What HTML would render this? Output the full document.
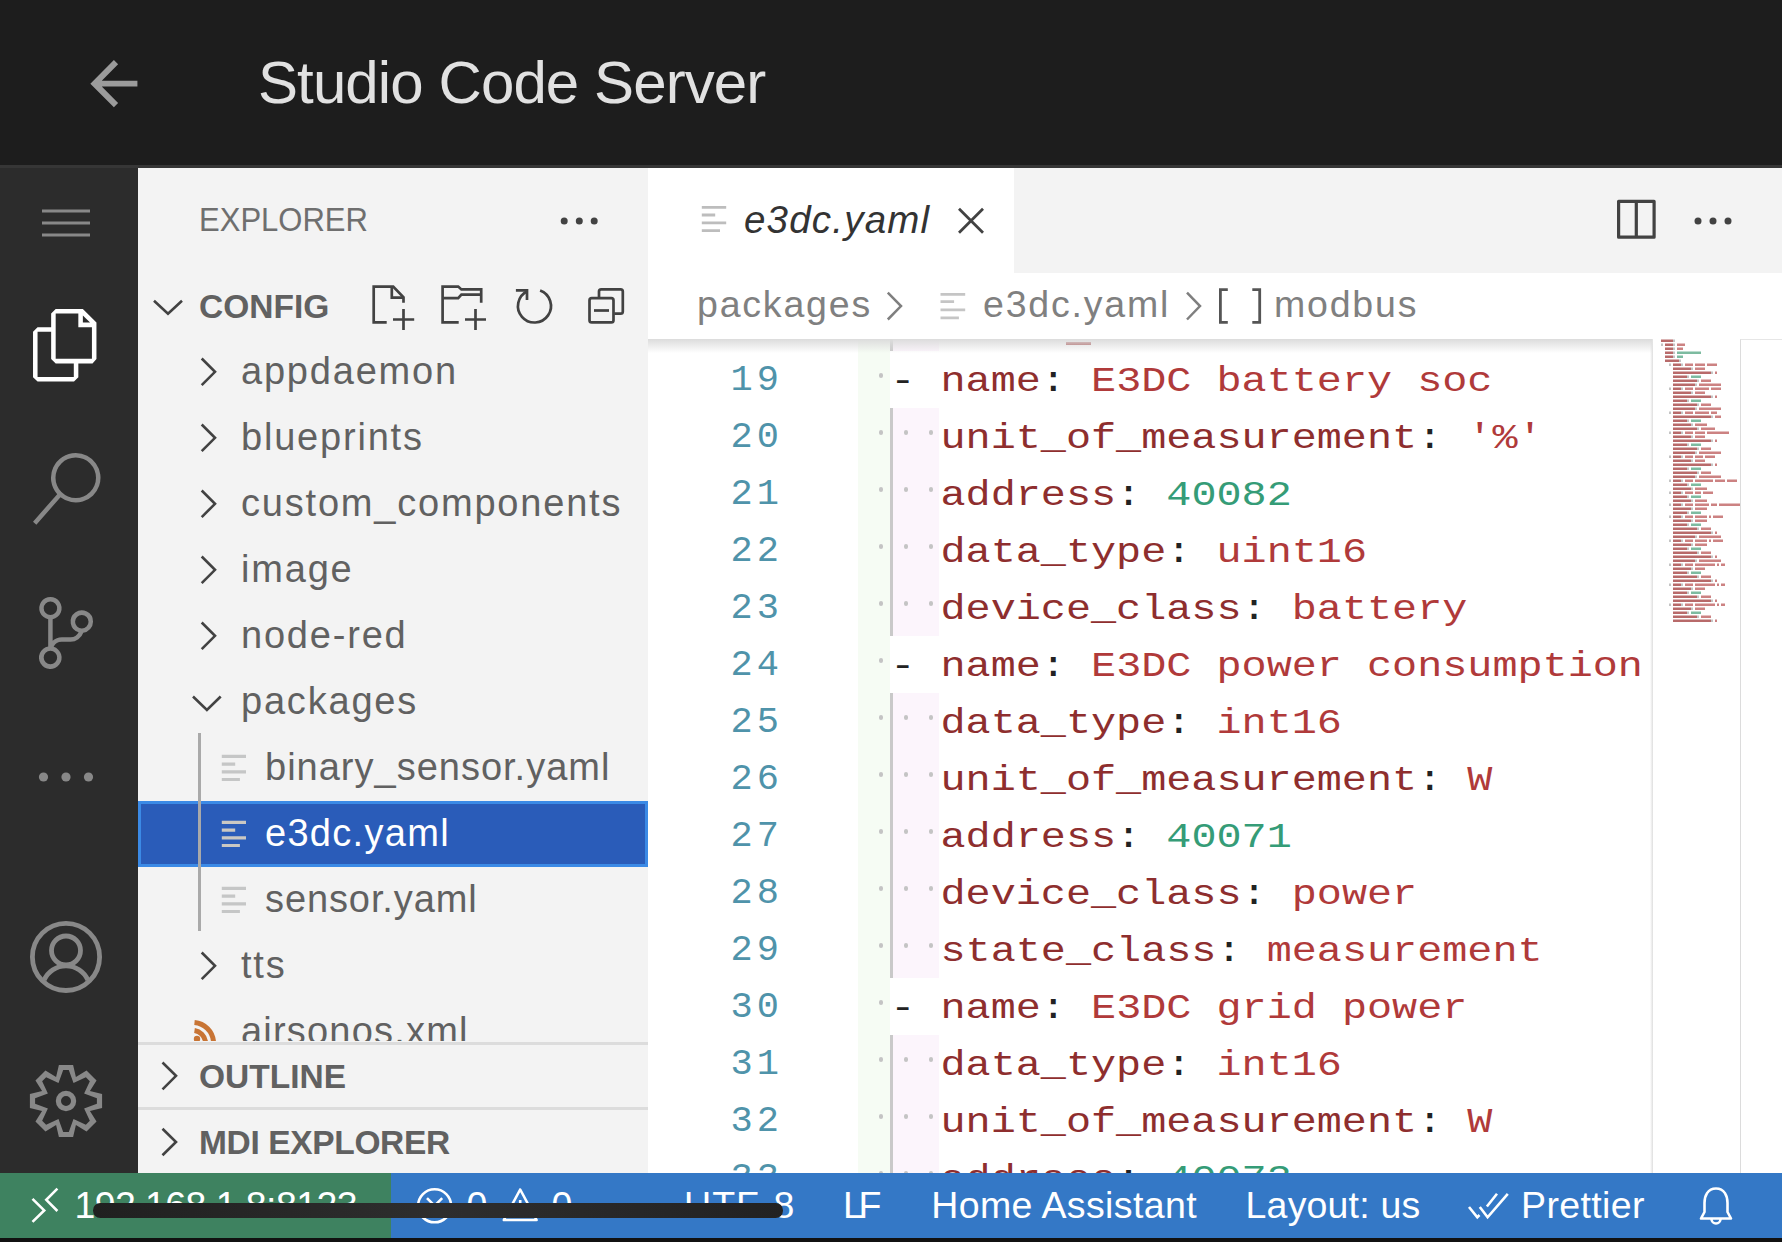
<!DOCTYPE html>
<html><head><meta charset="utf-8">
<style>
*{margin:0;padding:0;box-sizing:border-box}
html,body{width:1782px;height:1242px;overflow:hidden;background:#111}
body{position:relative;font-family:"Liberation Sans",sans-serif}
.a{position:absolute}
.t{position:absolute;white-space:pre;line-height:1}
svg{position:absolute;overflow:visible}
#title{left:0;top:0;width:1782px;height:165px;background:#1d1d1d}
#strip{left:0;top:165px;width:1782px;height:3px;background:#363636}
#act{left:0;top:168px;width:138px;height:1005px;background:#2c2c2c}
#side{left:138px;top:168px;width:510px;height:1005px;background:#f3f3f3}
#tabs{left:648px;top:168px;width:1134px;height:105px;background:#f3f3f3}
#tab{left:648px;top:168px;width:366px;height:105px;background:#fff}
#crumbs{left:648px;top:273px;width:1134px;height:66px;background:#fff}
#editor{left:648px;top:339px;width:1134px;height:834px;background:#fff;overflow:hidden}
#status{left:0;top:1173px;width:1782px;height:65px;background:#3478c6}
#remote{left:0;top:1173px;width:391px;height:65px;background:#3e8260}
.st{position:absolute;color:#fff;font-size:37.5px;line-height:1;white-space:pre}
.tree{position:absolute;font-size:38px;letter-spacing:1.8px;color:#616161;line-height:1;white-space:pre}
.code{position:absolute;font-family:"Liberation Mono",monospace;font-size:35px;letter-spacing:0;line-height:57px;white-space:pre;padding-top:3px;transform:scaleX(1.1943);transform-origin:0 0}
.dot{width:4.2px;height:4.2px;border-radius:50%;background:#c4c4c4}
.k{color:#8e2e2e}.s{color:#b03a3a}.n{color:#359c77}.p{color:#222}
.ln{position:absolute;font-family:"Liberation Mono",monospace;font-size:37px;letter-spacing:4px;padding-top:1px;color:#4f93aa;white-space:pre;line-height:57px;text-align:right;width:120px}
</style></head><body>
<div id="title" class="a"></div>
<svg style="left:77.8px;top:47.9px" width="71.3" height="71.3" viewBox="0 0 24 24"><path fill="#9b9b9b" d="M20,11V13H8L13.5,18.5L12.08,19.92L4.16,12L12.08,4.08L13.5,5.5L8,11H20Z"/></svg>
<div class="t" id="ttl" style="left:258px;top:53.4px;font-size:60px;letter-spacing:-0.9px;color:#e1e1e1">Studio Code Server</div>
<div id="strip" class="a"></div>
<div id="act" class="a"></div>
<div id="side" class="a"></div>
<div id="tabs" class="a"></div>
<div id="tab" class="a"></div>
<div id="crumbs" class="a"></div>
<div id="editor" class="a"></div>
<!--EDITOR-->
<div class="a" style="left:648px;top:339px;width:1004px;height:834px;overflow:hidden">
<div class="a" style="left:210.0px;top:-45.3px;width:32.4px;height:57px;background:#f6fcf4"></div>
<div class="a" style="left:242.4px;top:-45.3px;width:48.2px;height:57px;background:#fcf5fc"></div>
<div class="a" style="left:242.0px;top:-45.3px;width:3px;height:57px;background:#c9c9c9"></div>
<div class="ln" style="left:15.0px;top:-45.3px">18</div>
<div class="a dot" style="left:230.7px;top:-22.6px"></div>
<div class="a dot" style="left:255.8px;top:-22.6px"></div>
<div class="a dot" style="left:280.8px;top:-22.6px"></div>
<div class="a" style="left:210.0px;top:11.7px;width:32.4px;height:57px;background:#f6fcf4"></div>
<div class="ln" style="left:15.0px;top:11.7px">19</div>
<div class="a dot" style="left:230.7px;top:34.4px"></div>
<div class="a" style="left:210.0px;top:68.7px;width:32.4px;height:57px;background:#f6fcf4"></div>
<div class="a" style="left:242.4px;top:68.7px;width:48.2px;height:57px;background:#fcf5fc"></div>
<div class="a" style="left:242.0px;top:68.7px;width:3px;height:57px;background:#c9c9c9"></div>
<div class="ln" style="left:15.0px;top:68.7px">20</div>
<div class="a dot" style="left:230.7px;top:91.4px"></div>
<div class="a dot" style="left:255.8px;top:91.4px"></div>
<div class="a dot" style="left:280.8px;top:91.4px"></div>
<div class="a" style="left:210.0px;top:125.7px;width:32.4px;height:57px;background:#f6fcf4"></div>
<div class="a" style="left:242.4px;top:125.7px;width:48.2px;height:57px;background:#fcf5fc"></div>
<div class="a" style="left:242.0px;top:125.7px;width:3px;height:57px;background:#c9c9c9"></div>
<div class="ln" style="left:15.0px;top:125.7px">21</div>
<div class="a dot" style="left:230.7px;top:148.4px"></div>
<div class="a dot" style="left:255.8px;top:148.4px"></div>
<div class="a dot" style="left:280.8px;top:148.4px"></div>
<div class="a" style="left:210.0px;top:182.7px;width:32.4px;height:57px;background:#f6fcf4"></div>
<div class="a" style="left:242.4px;top:182.7px;width:48.2px;height:57px;background:#fcf5fc"></div>
<div class="a" style="left:242.0px;top:182.7px;width:3px;height:57px;background:#c9c9c9"></div>
<div class="ln" style="left:15.0px;top:182.7px">22</div>
<div class="a dot" style="left:230.7px;top:205.4px"></div>
<div class="a dot" style="left:255.8px;top:205.4px"></div>
<div class="a dot" style="left:280.8px;top:205.4px"></div>
<div class="a" style="left:210.0px;top:239.7px;width:32.4px;height:57px;background:#f6fcf4"></div>
<div class="a" style="left:242.4px;top:239.7px;width:48.2px;height:57px;background:#fcf5fc"></div>
<div class="a" style="left:242.0px;top:239.7px;width:3px;height:57px;background:#c9c9c9"></div>
<div class="ln" style="left:15.0px;top:239.7px">23</div>
<div class="a dot" style="left:230.7px;top:262.4px"></div>
<div class="a dot" style="left:255.8px;top:262.4px"></div>
<div class="a dot" style="left:280.8px;top:262.4px"></div>
<div class="a" style="left:210.0px;top:296.7px;width:32.4px;height:57px;background:#f6fcf4"></div>
<div class="ln" style="left:15.0px;top:296.7px">24</div>
<div class="a dot" style="left:230.7px;top:319.4px"></div>
<div class="a" style="left:210.0px;top:353.7px;width:32.4px;height:57px;background:#f6fcf4"></div>
<div class="a" style="left:242.4px;top:353.7px;width:48.2px;height:57px;background:#fcf5fc"></div>
<div class="a" style="left:242.0px;top:353.7px;width:3px;height:57px;background:#c9c9c9"></div>
<div class="ln" style="left:15.0px;top:353.7px">25</div>
<div class="a dot" style="left:230.7px;top:376.4px"></div>
<div class="a dot" style="left:255.8px;top:376.4px"></div>
<div class="a dot" style="left:280.8px;top:376.4px"></div>
<div class="a" style="left:210.0px;top:410.7px;width:32.4px;height:57px;background:#f6fcf4"></div>
<div class="a" style="left:242.4px;top:410.7px;width:48.2px;height:57px;background:#fcf5fc"></div>
<div class="a" style="left:242.0px;top:410.7px;width:3px;height:57px;background:#c9c9c9"></div>
<div class="ln" style="left:15.0px;top:410.7px">26</div>
<div class="a dot" style="left:230.7px;top:433.4px"></div>
<div class="a dot" style="left:255.8px;top:433.4px"></div>
<div class="a dot" style="left:280.8px;top:433.4px"></div>
<div class="a" style="left:210.0px;top:467.7px;width:32.4px;height:57px;background:#f6fcf4"></div>
<div class="a" style="left:242.4px;top:467.7px;width:48.2px;height:57px;background:#fcf5fc"></div>
<div class="a" style="left:242.0px;top:467.7px;width:3px;height:57px;background:#c9c9c9"></div>
<div class="ln" style="left:15.0px;top:467.7px">27</div>
<div class="a dot" style="left:230.7px;top:490.4px"></div>
<div class="a dot" style="left:255.8px;top:490.4px"></div>
<div class="a dot" style="left:280.8px;top:490.4px"></div>
<div class="a" style="left:210.0px;top:524.7px;width:32.4px;height:57px;background:#f6fcf4"></div>
<div class="a" style="left:242.4px;top:524.7px;width:48.2px;height:57px;background:#fcf5fc"></div>
<div class="a" style="left:242.0px;top:524.7px;width:3px;height:57px;background:#c9c9c9"></div>
<div class="ln" style="left:15.0px;top:524.7px">28</div>
<div class="a dot" style="left:230.7px;top:547.4px"></div>
<div class="a dot" style="left:255.8px;top:547.4px"></div>
<div class="a dot" style="left:280.8px;top:547.4px"></div>
<div class="a" style="left:210.0px;top:581.7px;width:32.4px;height:57px;background:#f6fcf4"></div>
<div class="a" style="left:242.4px;top:581.7px;width:48.2px;height:57px;background:#fcf5fc"></div>
<div class="a" style="left:242.0px;top:581.7px;width:3px;height:57px;background:#c9c9c9"></div>
<div class="ln" style="left:15.0px;top:581.7px">29</div>
<div class="a dot" style="left:230.7px;top:604.4px"></div>
<div class="a dot" style="left:255.8px;top:604.4px"></div>
<div class="a dot" style="left:280.8px;top:604.4px"></div>
<div class="a" style="left:210.0px;top:638.7px;width:32.4px;height:57px;background:#f6fcf4"></div>
<div class="ln" style="left:15.0px;top:638.7px">30</div>
<div class="a dot" style="left:230.7px;top:661.4px"></div>
<div class="a" style="left:210.0px;top:695.7px;width:32.4px;height:57px;background:#f6fcf4"></div>
<div class="a" style="left:242.4px;top:695.7px;width:48.2px;height:57px;background:#fcf5fc"></div>
<div class="a" style="left:242.0px;top:695.7px;width:3px;height:57px;background:#c9c9c9"></div>
<div class="ln" style="left:15.0px;top:695.7px">31</div>
<div class="a dot" style="left:230.7px;top:718.4px"></div>
<div class="a dot" style="left:255.8px;top:718.4px"></div>
<div class="a dot" style="left:280.8px;top:718.4px"></div>
<div class="a" style="left:210.0px;top:752.7px;width:32.4px;height:57px;background:#f6fcf4"></div>
<div class="a" style="left:242.4px;top:752.7px;width:48.2px;height:57px;background:#fcf5fc"></div>
<div class="a" style="left:242.0px;top:752.7px;width:3px;height:57px;background:#c9c9c9"></div>
<div class="ln" style="left:15.0px;top:752.7px">32</div>
<div class="a dot" style="left:230.7px;top:775.4px"></div>
<div class="a dot" style="left:255.8px;top:775.4px"></div>
<div class="a dot" style="left:280.8px;top:775.4px"></div>
<div class="a" style="left:210.0px;top:809.7px;width:32.4px;height:57px;background:#f6fcf4"></div>
<div class="a" style="left:242.4px;top:809.7px;width:48.2px;height:57px;background:#fcf5fc"></div>
<div class="a" style="left:242.0px;top:809.7px;width:3px;height:57px;background:#c9c9c9"></div>
<div class="ln" style="left:15.0px;top:809.7px">33</div>
<div class="a dot" style="left:230.7px;top:832.4px"></div>
<div class="a dot" style="left:255.8px;top:832.4px"></div>
<div class="a dot" style="left:280.8px;top:832.4px"></div>
<div class="a" style="left:210px;top:0;width:794px;height:834px;overflow:hidden">
<div class="code" style="left:-67.9px;top:-45.3px">      <span class="k">state_class</span><span class="p">:</span> <span class="s">measurement</span></div>
<div class="code" style="left:-67.9px;top:11.7px">    <span class="p">- </span><span class="k">name</span><span class="p">:</span> <span class="s">E3DC battery soc</span></div>
<div class="code" style="left:-67.9px;top:68.7px">      <span class="k">unit_of_measurement</span><span class="p">:</span> <span class="s">&#x27;%&#x27;</span></div>
<div class="code" style="left:-67.9px;top:125.7px">      <span class="k">address</span><span class="p">:</span> <span class="n">40082</span></div>
<div class="code" style="left:-67.9px;top:182.7px">      <span class="k">data_type</span><span class="p">:</span> <span class="s">uint16</span></div>
<div class="code" style="left:-67.9px;top:239.7px">      <span class="k">device_class</span><span class="p">:</span> <span class="s">battery</span></div>
<div class="code" style="left:-67.9px;top:296.7px">    <span class="p">- </span><span class="k">name</span><span class="p">:</span> <span class="s">E3DC power consumption</span></div>
<div class="code" style="left:-67.9px;top:353.7px">      <span class="k">data_type</span><span class="p">:</span> <span class="s">int16</span></div>
<div class="code" style="left:-67.9px;top:410.7px">      <span class="k">unit_of_measurement</span><span class="p">:</span> <span class="s">W</span></div>
<div class="code" style="left:-67.9px;top:467.7px">      <span class="k">address</span><span class="p">:</span> <span class="n">40071</span></div>
<div class="code" style="left:-67.9px;top:524.7px">      <span class="k">device_class</span><span class="p">:</span> <span class="s">power</span></div>
<div class="code" style="left:-67.9px;top:581.7px">      <span class="k">state_class</span><span class="p">:</span> <span class="s">measurement</span></div>
<div class="code" style="left:-67.9px;top:638.7px">    <span class="p">- </span><span class="k">name</span><span class="p">:</span> <span class="s">E3DC grid power</span></div>
<div class="code" style="left:-67.9px;top:695.7px">      <span class="k">data_type</span><span class="p">:</span> <span class="s">int16</span></div>
<div class="code" style="left:-67.9px;top:752.7px">      <span class="k">unit_of_measurement</span><span class="p">:</span> <span class="s">W</span></div>
<div class="code" style="left:-67.9px;top:809.7px">      <span class="k">address</span><span class="p">:</span> <span class="n">40073</span></div>
</div>
<div class="a" style="left:417.5px;top:3.3px;width:25px;height:2.6px;background:#a03a3a"></div>
<div class="a" style="left:0;top:0;width:1005px;height:14px;background:linear-gradient(#dcdcdc,rgba(255,255,255,0))"></div>
</div>
<svg style="left:0;top:0" width="1739" height="1242">
<path fill="#b86a6a" d="M1661 339.4h12v2.6h-12zM1665 343.4h8v2.6h-8zM1665 347.4h8v2.6h-8zM1665 351.4h8v2.6h-8zM1665 355.4h8v2.6h-8zM1665 359.4h14v2.6h-14zM1673 363.4h8v2.6h-8zM1673 367.4h18v2.6h-18zM1673 371.4h38v2.6h-38zM1673 375.4h14v2.6h-14zM1673 379.4h24v2.6h-24zM1673 383.4h22v2.6h-22zM1673 387.4h8v2.6h-8zM1673 391.4h18v2.6h-18zM1673 395.4h38v2.6h-38zM1673 399.4h14v2.6h-14zM1673 403.4h24v2.6h-24zM1673 407.4h22v2.6h-22zM1673 411.4h8v2.6h-8zM1673 415.4h38v2.6h-38zM1673 419.4h14v2.6h-14zM1673 423.4h18v2.6h-18zM1673 427.4h24v2.6h-24zM1673 431.4h8v2.6h-8zM1673 435.4h18v2.6h-18zM1673 439.4h38v2.6h-38zM1673 443.4h14v2.6h-14zM1673 447.4h24v2.6h-24zM1673 451.4h22v2.6h-22zM1673 455.4h8v2.6h-8zM1673 459.4h18v2.6h-18zM1673 463.4h38v2.6h-38zM1673 467.4h14v2.6h-14zM1673 471.4h24v2.6h-24zM1673 475.4h22v2.6h-22zM1673 479.4h8v2.6h-8zM1673 483.4h14v2.6h-14zM1673 487.4h18v2.6h-18zM1673 491.4h8v2.6h-8zM1673 495.4h14v2.6h-14zM1673 499.4h18v2.6h-18zM1673 503.4h8v2.6h-8zM1673 507.4h18v2.6h-18zM1673 511.4h14v2.6h-14zM1673 515.4h8v2.6h-8zM1673 519.4h18v2.6h-18zM1673 523.4h14v2.6h-14zM1673 527.4h24v2.6h-24zM1673 531.4h38v2.6h-38zM1673 535.4h22v2.6h-22zM1673 539.4h8v2.6h-8zM1673 543.4h18v2.6h-18zM1673 547.4h14v2.6h-14zM1673 551.4h24v2.6h-24zM1673 555.4h38v2.6h-38zM1673 559.4h22v2.6h-22zM1673 563.4h8v2.6h-8zM1673 567.4h18v2.6h-18zM1673 571.4h14v2.6h-14zM1673 575.4h24v2.6h-24zM1673 579.4h38v2.6h-38zM1673 583.4h8v2.6h-8zM1673 587.4h18v2.6h-18zM1673 591.4h14v2.6h-14zM1673 595.4h24v2.6h-24zM1673 599.4h38v2.6h-38zM1673 603.4h8v2.6h-8zM1673 607.4h18v2.6h-18zM1673 611.4h14v2.6h-14zM1673 615.4h24v2.6h-24zM1673 619.4h38v2.6h-38z"/>
<path fill="#cc8282" d="M1677 343.4h8v2.6h-8zM1677 347.4h6v2.6h-6zM1685 363.4h8v2.6h-8zM1695 363.4h10v2.6h-10zM1707 363.4h10v2.6h-10zM1695 367.4h10v2.6h-10zM1715 371.4h2v2.6h-2zM1701 379.4h10v2.6h-10zM1699 383.4h22v2.6h-22zM1685 387.4h8v2.6h-8zM1695 387.4h14v2.6h-14zM1711 387.4h10v2.6h-10zM1695 391.4h10v2.6h-10zM1715 395.4h2v2.6h-2zM1701 403.4h10v2.6h-10zM1699 407.4h22v2.6h-22zM1685 411.4h8v2.6h-8zM1695 411.4h14v2.6h-14zM1711 411.4h6v2.6h-6zM1715 415.4h6v2.6h-6zM1695 423.4h12v2.6h-12zM1701 427.4h14v2.6h-14zM1685 431.4h8v2.6h-8zM1695 431.4h10v2.6h-10zM1707 431.4h22v2.6h-22zM1695 435.4h10v2.6h-10zM1715 439.4h2v2.6h-2zM1701 447.4h10v2.6h-10zM1699 451.4h22v2.6h-22zM1685 455.4h8v2.6h-8zM1695 455.4h8v2.6h-8zM1705 455.4h10v2.6h-10zM1695 459.4h10v2.6h-10zM1715 463.4h2v2.6h-2zM1701 471.4h10v2.6h-10zM1699 475.4h22v2.6h-22zM1685 479.4h8v2.6h-8zM1695 479.4h18v2.6h-18zM1715 479.4h10v2.6h-10zM1727 479.4h10v2.6h-10zM1695 487.4h12v2.6h-12zM1685 491.4h8v2.6h-8zM1695 491.4h6v2.6h-6zM1703 491.4h10v2.6h-10zM1695 499.4h12v2.6h-12zM1685 503.4h8v2.6h-8zM1695 503.4h14v2.6h-14zM1711 503.4h6v2.6h-6zM1719 503.4h22v2.6h-22zM1695 507.4h12v2.6h-12zM1685 515.4h8v2.6h-8zM1695 515.4h12v2.6h-12zM1709 515.4h2v2.6h-2zM1713 515.4h10v2.6h-10zM1695 519.4h12v2.6h-12zM1701 527.4h10v2.6h-10zM1715 531.4h2v2.6h-2zM1699 535.4h22v2.6h-22zM1685 539.4h8v2.6h-8zM1695 539.4h12v2.6h-12zM1709 539.4h2v2.6h-2zM1713 539.4h10v2.6h-10zM1695 543.4h12v2.6h-12zM1701 551.4h10v2.6h-10zM1715 555.4h2v2.6h-2zM1699 559.4h22v2.6h-22zM1685 563.4h8v2.6h-8zM1695 563.4h20v2.6h-20zM1717 563.4h2v2.6h-2zM1721 563.4h4v2.6h-4zM1695 567.4h10v2.6h-10zM1701 575.4h10v2.6h-10zM1715 579.4h2v2.6h-2zM1685 583.4h8v2.6h-8zM1695 583.4h20v2.6h-20zM1717 583.4h2v2.6h-2zM1721 583.4h4v2.6h-4zM1695 587.4h10v2.6h-10zM1701 595.4h10v2.6h-10zM1715 599.4h2v2.6h-2zM1685 603.4h8v2.6h-8zM1695 603.4h20v2.6h-20zM1717 603.4h2v2.6h-2zM1721 603.4h4v2.6h-4zM1695 607.4h10v2.6h-10zM1701 615.4h10v2.6h-10zM1715 619.4h2v2.6h-2z"/>
<path fill="#7dbba0" d="M1677 351.4h24v2.6h-24zM1677 355.4h6v2.6h-6zM1691 375.4h10v2.6h-10zM1691 399.4h10v2.6h-10zM1691 419.4h10v2.6h-10zM1691 443.4h10v2.6h-10zM1691 467.4h10v2.6h-10zM1691 483.4h10v2.6h-10zM1691 495.4h10v2.6h-10zM1691 511.4h10v2.6h-10zM1691 523.4h10v2.6h-10zM1691 547.4h10v2.6h-10zM1691 571.4h10v2.6h-10zM1691 591.4h10v2.6h-10zM1691 611.4h10v2.6h-10z"/>
<path fill="#c4c4c4" d="M1673 339.4h2v2.6h-2zM1661 343.4h2v2.6h-2zM1673 343.4h2v2.6h-2zM1673 347.4h2v2.6h-2zM1673 351.4h2v2.6h-2zM1673 355.4h2v2.6h-2zM1679 359.4h2v2.6h-2zM1669 363.4h2v2.6h-2zM1681 363.4h2v2.6h-2zM1691 367.4h2v2.6h-2zM1711 371.4h2v2.6h-2zM1687 375.4h2v2.6h-2zM1697 379.4h2v2.6h-2zM1695 383.4h2v2.6h-2zM1669 387.4h2v2.6h-2zM1681 387.4h2v2.6h-2zM1691 391.4h2v2.6h-2zM1711 395.4h2v2.6h-2zM1687 399.4h2v2.6h-2zM1697 403.4h2v2.6h-2zM1695 407.4h2v2.6h-2zM1669 411.4h2v2.6h-2zM1681 411.4h2v2.6h-2zM1711 415.4h2v2.6h-2zM1687 419.4h2v2.6h-2zM1691 423.4h2v2.6h-2zM1697 427.4h2v2.6h-2zM1669 431.4h2v2.6h-2zM1681 431.4h2v2.6h-2zM1691 435.4h2v2.6h-2zM1711 439.4h2v2.6h-2zM1687 443.4h2v2.6h-2zM1697 447.4h2v2.6h-2zM1695 451.4h2v2.6h-2zM1669 455.4h2v2.6h-2zM1681 455.4h2v2.6h-2zM1691 459.4h2v2.6h-2zM1711 463.4h2v2.6h-2zM1687 467.4h2v2.6h-2zM1697 471.4h2v2.6h-2zM1695 475.4h2v2.6h-2zM1669 479.4h2v2.6h-2zM1681 479.4h2v2.6h-2zM1687 483.4h2v2.6h-2zM1691 487.4h2v2.6h-2zM1669 491.4h2v2.6h-2zM1681 491.4h2v2.6h-2zM1687 495.4h2v2.6h-2zM1691 499.4h2v2.6h-2zM1669 503.4h2v2.6h-2zM1681 503.4h2v2.6h-2zM1691 507.4h2v2.6h-2zM1687 511.4h2v2.6h-2zM1669 515.4h2v2.6h-2zM1681 515.4h2v2.6h-2zM1691 519.4h2v2.6h-2zM1687 523.4h2v2.6h-2zM1697 527.4h2v2.6h-2zM1711 531.4h2v2.6h-2zM1695 535.4h2v2.6h-2zM1669 539.4h2v2.6h-2zM1681 539.4h2v2.6h-2zM1691 543.4h2v2.6h-2zM1687 547.4h2v2.6h-2zM1697 551.4h2v2.6h-2zM1711 555.4h2v2.6h-2zM1695 559.4h2v2.6h-2zM1669 563.4h2v2.6h-2zM1681 563.4h2v2.6h-2zM1691 567.4h2v2.6h-2zM1687 571.4h2v2.6h-2zM1697 575.4h2v2.6h-2zM1711 579.4h2v2.6h-2zM1669 583.4h2v2.6h-2zM1681 583.4h2v2.6h-2zM1691 587.4h2v2.6h-2zM1687 591.4h2v2.6h-2zM1697 595.4h2v2.6h-2zM1711 599.4h2v2.6h-2zM1669 603.4h2v2.6h-2zM1681 603.4h2v2.6h-2zM1691 607.4h2v2.6h-2zM1687 611.4h2v2.6h-2zM1697 615.4h2v2.6h-2zM1711 619.4h2v2.6h-2z"/>
</svg>
<div class="a" style="left:1650px;top:339px;width:3px;height:834px;background:linear-gradient(90deg,rgba(0,0,0,0),#dedede)"></div>
<div class="a" style="left:1740px;top:339px;width:42px;height:834px;border-left:1.5px solid #dcdcdc;border-top:1.5px solid #e6e6e6"></div>
<!--/EDITOR-->

<!-- activity bar icons -->
<svg style="left:42px;top:207.5px" width="48" height="30"><path stroke="#888" stroke-width="3" d="M0 3H48M0 15H48M0 27H48"/></svg>
<svg style="left:29.9px;top:308.7px" width="72.5" height="72.5" viewBox="0 0 24 24"><path fill="#fff" fill-rule="evenodd" d="M17.5 0h-9L7 1.5V6H2.5L1 7.5v15.07L2.5 24h12.07L16 22.57V18h4.7l1.3-1.43V4.5L17.5 0zm0 2.12l2.38 2.38H17.5V2.12zm-3 20.38h-12v-15H7v9.07L8.5 18h6v4.5zm6-6h-12v-15H16V6h4.5v10.5z"/></svg>
<svg style="left:30.1px;top:452.5px" width="72" height="72" viewBox="0 0 24 24"><path fill="#888" d="M15.25 0a8.25 8.25 0 0 0-6.18 13.72L1 22.88l1.12 1 8.05-9.12A8.251 8.251 0 1 0 15.25.01V0zm0 15a6.75 6.75 0 1 1 0-13.5 6.75 6.75 0 0 1 0 13.5z"/></svg>
<svg style="left:30.3px;top:596.5px" width="72" height="72" viewBox="0 0 24 24"><path fill="#888" d="M21.007 8.222A3.738 3.738 0 0 0 15.045 5.2a3.737 3.737 0 0 0 1.156 6.583 2.988 2.988 0 0 1-2.668 1.67h-2.99a4.456 4.456 0 0 0-2.989 1.165V7.4a3.737 3.737 0 1 0-1.494 0v9.117a3.776 3.776 0 1 0 1.816.099 2.99 2.99 0 0 1 2.668-1.667h2.99a4.484 4.484 0 0 0 4.223-3.039 3.736 3.736 0 0 0 3.25-3.687zM4.565 3.738a2.242 2.242 0 1 1 4.484 0 2.242 2.242 0 0 1-4.484 0zm4.484 16.441a2.242 2.242 0 1 1-4.484 0 2.242 2.242 0 0 1 4.484 0zm8.221-9.715a2.242 2.242 0 1 1 0-4.485 2.242 2.242 0 0 1 0 4.485z"/></svg>
<svg style="left:0;top:0" width="138" height="1242"><g fill="#888"><circle cx="43.5" cy="777" r="4.6"/><circle cx="66" cy="777" r="4.6"/><circle cx="88.5" cy="777" r="4.6"/></g>
<g fill="none" stroke="#888" stroke-width="4.8"><circle cx="66" cy="956.9" r="33.6"/><circle cx="66" cy="950.5" r="14.5"/><path d="M44.1 980A24 24 0 0 1 87.9 980"/></g></svg>
<svg style="left:0;top:0" width="138" height="1242"><path fill="#888" fill-rule="evenodd" d="M58.90 1064.90L73.10 1064.90L75.91 1077.07L86.51 1070.45L96.55 1080.49L89.93 1091.09L102.10 1093.90L102.10 1108.10L89.93 1110.91L96.55 1121.51L86.51 1131.55L75.91 1124.93L73.10 1137.10L58.90 1137.10L56.09 1124.93L45.49 1131.55L35.45 1121.51L42.07 1110.91L29.90 1108.10L29.90 1093.90L42.07 1091.09L35.45 1080.49L45.49 1070.45L56.09 1077.07ZM63.20 1070.10L68.80 1070.10L73.50 1082.89L85.87 1077.17L89.83 1081.13L84.11 1093.50L96.90 1098.20L96.90 1103.80L84.11 1108.50L89.83 1120.87L85.87 1124.83L73.50 1119.11L68.80 1131.90L63.20 1131.90L58.50 1119.11L46.13 1124.83L42.17 1120.87L47.89 1108.50L35.10 1103.80L35.10 1098.20L47.89 1093.50L42.17 1081.13L46.13 1077.17L58.50 1082.89Z"/><circle cx="66" cy="1101" r="7.6" fill="none" stroke="#888" stroke-width="5.2"/></svg>


<!-- sidebar -->
<div class="t" id="explorer" style="left:199px;top:202.5px;font-size:33.5px;transform:scaleX(0.926);transform-origin:0 0;color:#6f6f6f">EXPLORER</div>
<svg style="left:0;top:0" width="1782" height="1242"><g fill="#424242"><circle cx="564.2" cy="220.9" r="3.5"/><circle cx="579.3" cy="220.9" r="3.5"/><circle cx="594.2" cy="220.9" r="3.5"/></g></svg>
<div class="t" id="config" style="left:199px;top:290px;font-size:33.5px;font-weight:bold;color:#616161">CONFIG</div>
<div class="t" id="outline" style="left:199px;top:1060.1px;font-size:33.5px;font-weight:bold;color:#616161">OUTLINE</div>
<div class="t" id="mdi" style="left:199px;top:1125.7px;font-size:33.5px;letter-spacing:-0.35px;font-weight:bold;color:#616161">MDI EXPLORER</div>
<div class="a" style="left:138px;top:801px;width:510px;height:65.5px;background:#2a5cb9;border:3px solid #3b8ae6"></div>
<div class="a" style="left:198px;top:733px;width:3px;height:198px;background:#a9a9a9"></div>
<svg style="left:0;top:0" width="1782" height="1242"><g fill="none" stroke="#424242" stroke-width="2.7" stroke-linejoin="miter">
<path d="M386.7 322.3H373.7V286.6H393.2L403.5 297.3V302.7"/><path d="M391.8 286.6V297.6H403.5"/><path d="M393 319.5H414.2M403.5 309V330"/>
<path d="M458.7 322.3H442.6V286.6H458.2L461.4 289.4H481.2V302.7"/><path d="M442.6 298.2H458.2L461.4 294.7H481.2"/><path d="M465 319.5H486M475.5 309V330"/>
<path d="M540.1 290.5A16.5 16.5 0 1 1 527.2 291.2"/><path d="M515.9 290.4H527V300"/>
<path d="M599 297.5V291.5Q599 289.3 601.2 289.3H620.6Q622.8 289.3 622.8 291.5V311.5Q622.8 313.7 620.6 313.7H614.3"/><rect x="589.5" y="298.2" width="24" height="24.2" rx="2.2"/><path d="M594 310.5H609"/>
</g></svg>
<div class="tree" style="left:241px;top:351.6px">appdaemon</div>
<div class="tree" style="left:241px;top:417.6px">blueprints</div>
<div class="tree" style="left:241px;top:483.6px">custom_components</div>
<div class="tree" style="left:241px;top:549.6px">image</div>
<div class="tree" style="left:241px;top:615.6px">node-red</div>
<div class="tree" style="left:241px;top:681.6px">packages</div>
<div class="tree" style="left:265px;top:747.6px;letter-spacing:1.0px">binary_sensor.yaml</div>
<div class="tree" style="left:265px;top:813.6px;color:#fff;letter-spacing:1.3px">e3dc.yaml</div>
<div class="tree" style="left:265px;top:879.6px;letter-spacing:0.9px">sensor.yaml</div>
<div class="tree" style="left:241px;top:945.6px">tts</div>
<div class="a" style="left:138px;top:1000px;width:510px;height:41px;overflow:hidden"><div class="tree" style="left:103px;top:11.6px;letter-spacing:1.2px">airsonos.xml</div></div>
<svg style="left:0;top:0" width="1782" height="1242"><path fill="none" stroke="#424242" stroke-width="2.6" d="M201.7 358.5L215 371.8L201.7 385.1 M201.7 424.5L215 437.8L201.7 451.1 M201.7 490.5L215 503.8L201.7 517.1 M201.7 556.5L215 569.8L201.7 583.1 M201.7 622.5L215 635.8L201.7 649.1 M201.7 952.5L215 965.8L201.7 979.1 M193 696.5L206.9 710L220.7 696.5 M154 300.8L168 313.8L182 300.8 M162.5 1062.5L176 1075.8L162.5 1089.3 M162.5 1128.8L176 1142L162.5 1155.3"/><path fill="#c5c6c6" d="M221.8 754.8h24.2v3.1h-24.2z M221.8 762.5h13.4v3.2h-13.4z M221.8 770.3h24.2v3.3h-24.2z M221.8 778.0h18.1v3h-18.1z"/><path fill="#cac8c3" d="M221.8 820.8h24.2v3.1h-24.2z M221.8 828.5h13.4v3.2h-13.4z M221.8 836.3h24.2v3.3h-24.2z M221.8 844.0h18.1v3h-18.1z"/><path fill="#c5c6c6" d="M221.8 886.8h24.2v3.1h-24.2z M221.8 894.5h13.4v3.2h-13.4z M221.8 902.3h24.2v3.3h-24.2z M221.8 910.0h18.1v3h-18.1z"/><g clip-path="inset(0 0 0 0)"></g></svg><div class="a" style="left:180px;top:1010px;width:60px;height:31px;overflow:hidden"><svg style="left:0;top:0" width="60" height="40"><g fill="none" stroke="#c87434" stroke-width="5"><path d="M14.5 12.5A21 21 0 0 1 33.5 31.5"/><path d="M14.5 20.5A13 13 0 0 1 25.5 31.5"/></g><circle cx="17" cy="29" r="3.2" fill="#c87434"/></svg></div>
<div class="a" style="left:138px;top:1041.5px;width:510px;height:3px;background:#dcdcdc"></div>
<div class="a" style="left:138px;top:1106.5px;width:510px;height:3px;background:#dcdcdc"></div>


<!-- tab + breadcrumbs -->
<svg style="left:0;top:0" width="1782" height="1242">
<path fill="#bdbdbd" d="M701.8 205.9h24.4v2.8h-24.4z M701.8 213.6h13.4v2.8h-13.4z M701.8 221.4h24.4v2.8h-24.4z M701.8 229.2h18.2v2.8h-18.2z"/>
<path fill="none" stroke="#424242" stroke-width="2.8" d="M959 208.8L983 232.8M983 208.8L959 232.8"/>
<path fill="none" stroke="#424242" stroke-width="3.2" d="M1618.6 201.3H1654.1V237.2H1618.6Z M1636.3 201.3V237.2" stroke-linejoin="round"/>
<g fill="#424242"><circle cx="1698" cy="221" r="3.5"/><circle cx="1713" cy="221" r="3.5"/><circle cx="1728" cy="221" r="3.5"/></g>
<path fill="#c5c5c5" d="M940.5 292.9h24.7v2.8h-24.7z M940.5 300.3h13.6v2.8h-13.6z M940.5 308.5h24.7v2.8h-24.7z M940.5 316.4h18.4v2.8h-18.4z"/>
<path fill="none" stroke="#7f7f7f" stroke-width="2.5" d="M887.8 292.7L901 306.1L887.8 319.5 M1187 292.7L1200 306.1L1187 319.5"/>
<path fill="none" stroke="#555" stroke-width="2.8" d="M1227.8 289.6H1220.4V322.3H1227.8 M1252.3 289.6H1259.7V322.3H1252.3"/>
</svg>
<div class="t" id="tabtitle" style="left:744px;top:201.3px;font-size:38.5px;letter-spacing:1.2px;font-style:italic;color:#333">e3dc.yaml</div>
<div class="t" id="cr1" style="left:697px;top:285.7px;font-size:37.5px;letter-spacing:1.8px;color:#808080">packages</div>
<div class="t" id="cr2" style="left:983px;top:285.7px;font-size:37.5px;letter-spacing:1.8px;color:#808080">e3dc.yaml</div>
<div class="t" id="cr3" style="left:1274px;top:285.7px;font-size:37.5px;letter-spacing:1.8px;color:#808080">modbus</div>

<div id="status" class="a"></div>
<div id="remote" class="a"></div>

<!-- status items -->
<div class="st" id="s_ip" style="left:74.4px;top:1186.5px;letter-spacing:-0.58px">192.168.1.8:8123</div>
<div class="st" id="s_e0" style="left:466.5px;top:1186.5px;letter-spacing:0.00px">0</div>
<div class="st" id="s_w0" style="left:551.6px;top:1186.5px;letter-spacing:0.00px">0</div>
<div class="st" id="s_utf" style="left:684.0px;top:1186.5px;letter-spacing:1.05px">UTF-8</div>
<div class="st" id="s_lf" style="left:843.0px;top:1186.5px;letter-spacing:-5.30px">LF</div>
<div class="st" id="s_ha" style="left:931.2px;top:1186.5px;letter-spacing:0.38px">Home Assistant</div>
<div class="st" id="s_lay" style="left:1245.6px;top:1186.5px;letter-spacing:0.17px">Layout: us</div>
<div class="st" id="s_pr" style="left:1521.0px;top:1186.5px;letter-spacing:0.38px">Prettier</div>
<svg style="left:0;top:0" width="1782" height="1242"><g fill="none" stroke="#fff" stroke-width="2.6">
<path d="M32.5 1198.8L44.2 1210.4L32.5 1221.9M57.4 1188.7L46.3 1199.8L57.4 1211"/>
<circle cx="434.6" cy="1205.8" r="16.5"/><path d="M427 1198.2L442.2 1213.4M442.2 1198.2L427 1213.4"/>
<path d="M520.2 1189.5L503.8 1220H536.6Z" stroke-linejoin="round"/><path d="M520.2 1200V1210M520.2 1213.5V1216"/>
<path d="M1469 1207L1477.3 1217.3L1479.5 1215M1479.8 1207L1487.6 1217.3L1507.8 1193.8M1486.9 1206.5L1497 1193.8"/>
<path d="M1716 1188.5C1707.5 1188.5 1704.5 1196 1704.5 1203V1212L1701 1218.5H1731L1727.5 1212V1203C1727.5 1196 1724.5 1188.5 1716 1188.5Z" stroke-linejoin="round"/><path d="M1711.5 1219A4.5 4.5 0 0 0 1720.5 1219"/>
</g></svg>
<div class="a" style="left:93px;top:1203.3px;width:690px;height:14.5px;border-radius:7.25px;background:linear-gradient(90deg,#202020,#2e2e2e 50%,#222)"></div>

<div class="a" style="left:0;top:1238px;width:1782px;height:4px;background:#111"></div>
</body></html>
